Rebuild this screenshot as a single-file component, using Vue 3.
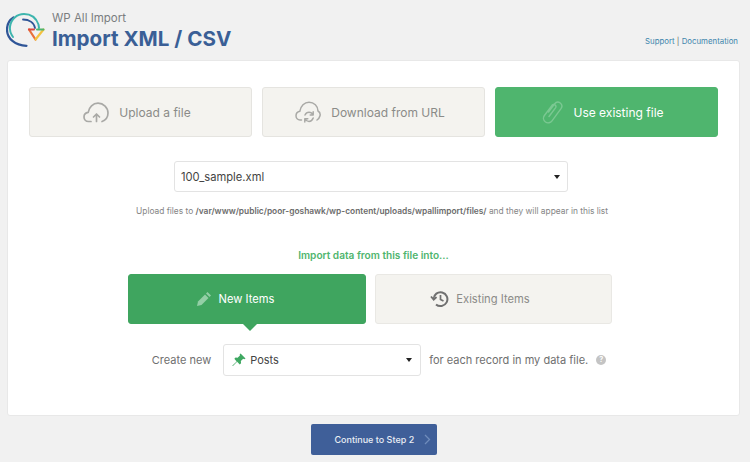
<template>
  <div class="page">
    <!-- header -->
    <header class="head">
      <svg class="logo" width="40" height="38" viewBox="6 12 40 38" fill="none" stroke-linecap="round">
        <path d="M26.500 45.800C15 45.500 7 38.500 7 29.500C7 24.500 9.500 20 13.500 17.500" stroke="#2f5597" stroke-width="2.200" />
        <path d="M13 37C10.500 33.500 9.500 30 10 26.500C11 19 17 14 24 14C30.500 14 36 17.500 38.500 24.500L39 28" stroke="#3db5ae" stroke-width="2" />
        <path d="M23 19.500C29 19.500 34 22.500 35 28" stroke="#2f5597" stroke-width="1.800" />
        <path d="M29 29.500L35.500 39.500" stroke="#e8703a" stroke-width="2.200" />
        <path d="M43.500 29.500L35.500 39.500" stroke="#f3c23f" stroke-width="2.200" />
        <path d="M29 29.500H34" stroke="#d9473f" stroke-width="2" />
        <path d="M37 29.500H43.500" stroke="#4fb56e" stroke-width="2" />
      </svg>
      <div class="head__titles">
        <div class="head__sub">WP All Import</div>
        <h1 class="head__title">Import XML / CSV</h1>
      </div>
      <div class="head__links"><a>Support</a> | <a>Documentation</a></div>
    </header>

    <!-- main card -->
    <main class="card">
      <div class="tabs">
        <div class="tab">
          <svg width="26" height="21" viewBox="0 0 26 21" fill="none" stroke="#a9a9a6" stroke-width="1.700" stroke-linecap="round" stroke-linejoin="round">
            <path d="M8 19.500H5.500C2.800 19.500 1 17.500 1 15C1 12.500 2.800 10.600 5.200 10.300C6 5 10 1.200 15 1.200C20.500 1.200 25 5.500 25 11C25 14.800 22.800 18 19 19.500" />
            <path d="M13.500 19.500V12.500M10.500 15L13.500 12L16.500 15" />
          </svg>
          <span>Upload a file</span>
        </div>
        <div class="tab">
          <svg width="26" height="22" viewBox="0 0 26 22" fill="none" stroke="#a9a9a6" stroke-width="1.500" stroke-linecap="round" stroke-linejoin="round">
            <path d="M6.500 19H5C2.800 19 1 17.200 1 14.800C1 12.500 2.600 10.800 4.800 10.300C5.600 5 9.500 1.200 14 1.200C19 1.200 23 5 23 10C24.800 11 25.500 12.800 25 14.800C24.600 16.500 23.500 18 22 19" />
            <path d="M10 14C10.800 12.300 12.300 11.300 14 11.300C15.800 11.300 17.200 12.200 18 13.800M18.200 10.800V14H15.200" />
            <path d="M18.200 17C17.400 19 15.800 20.400 14 20.400C12.200 20.400 10.800 19.500 10 18M9.800 21V17.800H12.800" />
          </svg>
          <span>Download from URL</span>
        </div>
        <div class="tab tab--on">
          <svg width="21" height="23" viewBox="0 0 21 23" fill="none" stroke="#7bc892" stroke-width="1.400" stroke-linecap="round" stroke-linejoin="round">
            <path d="M6.500 11L12.500 3C14 1 16.500 .7 18.300 2C20 3.400 20.300 5.800 19 7.700L10 19.800C8.500 21.900 5.600 22.500 3.500 21C1.300 19.400 .9 16.600 2.400 14.500L10 4.300C10.800 3.300 12 3.200 13 3.900C14 4.600 14.200 5.800 13.500 6.800L7 15.500" />
          </svg>
          <span>Use existing file</span>
        </div>
      </div>

      <div class="select select--file">
        <span>100_sample.xml</span>
        <i class="caret"></i>
      </div>
      <p class="hint">Upload files to <b>/var/www/public/poor-goshawk/wp-content/uploads/wpallimport/files/</b> and they will appear in this list</p>

      <p class="lead">Import data from this file into...</p>

      <div class="choices">
        <div class="choice choice--on">
          <svg width="16" height="16" viewBox="0 0 16 16" fill="#93cfa6">
            <path d="M11.500 1L15 4.500L13.500 6L10 2.500Z" />
            <path d="M9 3.500L12.500 7L5.500 14L1 15L2 10.500Z" />
          </svg>
          <span>New Items</span>
        </div>
        <div class="choice choice--off">
          <svg width="19" height="18" viewBox="0 0 19 18" fill="none" stroke="#707070" stroke-width="2">
            <path d="M3.600 9A6.900 6.900 0 1 1 6 14.400" />
            <path d="M1 6.500L3.700 9.700L6.500 7" stroke-width="1.800" />
            <path d="M10.500 5V9.400L13.500 11" stroke-width="1.700" />
          </svg>
          <span>Existing Items</span>
        </div>
      </div>

      <div class="create">
        <span>Create new</span>
        <div class="select select--type">
          <svg width="14" height="14" viewBox="0 0 15 15" fill="#3fa862">
            <path d="M9.200 0.500L14.500 5.800L13.300 6.600L12 6.200L9.500 8.700L9.700 11L8.300 12.200L5.500 9.500L1 14L0.500 14L0.500 13.500L5 9L2.500 6.200L3.800 4.800L6 5L8.500 2.600L8.300 1.400Z" />
          </svg>
          <span class="select__val">Posts</span>
          <i class="caret"></i>
        </div>
        <span>for each record in my data file.</span>
        <span class="help">?</span>
      </div>
    </main>

    <div class="foot">
      <button class="next">
        <span>Continue to Step 2</span>
        <svg width="7" height="11" viewBox="0 0 7 11" fill="none" stroke="#6f8cbb" stroke-width="1.300">
          <path d="M1 1L5.500 5.500L1 10" />
        </svg>
      </button>
    </div>
  </div>
</template>

<script setup>
</script>

<style>
html, body {
  margin: 0;
  background: #f1f1f1;
}
</style>

<style scoped>
.page {
  width: 750px;
  height: 462px;
  overflow: hidden;
  box-sizing: border-box;
  padding: 0 10px 0 7px;
  font-family: Inter, "Liberation Sans", sans-serif;
  background: #f1f1f1;
}

/* header */
.head {
  height: 60px;
  display: flex;
  margin-left: -7px;
}
.logo {
  margin: 12px 6px 0 6px;
  flex: none;
}
.head__titles {
  padding-top: 10px;
}
.head__sub {
  font-size: 11.500px;
  line-height: 16px;
  color: #7a7d80;
}
.head__title {
  margin: 0;
  font-size: 20.600px;
  line-height: 26px;
  font-weight: 700;
  color: #3a5f96;
}
.head__links {
  margin-left: auto;
  margin-right: 2px;
  padding-top: 34px;
  font-size: 7.850px;
  line-height: 14px;
  color: #666;
}
.head__links a {
  color: #3f86ad;
}

/* card */
.card {
  height: 356px;
  box-sizing: border-box;
  background: #fff;
  border: 1px solid #e8e8e8;
  border-radius: 3px;
  padding-top: 26px;
  display: flex;
  flex-direction: column;
  align-items: center;
}

.tabs {
  display: flex;
  gap: 9.500px;
}
.tab {
  width: 223.500px;
  height: 50px;
  box-sizing: border-box;
  display: flex;
  align-items: center;
  justify-content: center;
  gap: 10px;
  padding-right: 7px;
  background: #f4f3ef;
  border: 1px solid #e5e4e0;
  border-radius: 3px;
  font-size: 12px;
  color: #8b8b88;
}
.tab--on {
  background: #4fb56e;
  border-color: #4fb56e;
  color: #fff;
}

.select {
  box-sizing: border-box;
  display: flex;
  align-items: center;
  background: #fff;
  border: 1px solid #e3e3e3;
  border-radius: 3px;
  color: #444;
  font-size: 11.200px;
}
.select--file {
  width: 394px;
  height: 31px;
  margin: 24px 5px 0 0;
  padding: 0 7px 0 6px;
  justify-content: space-between;
}
.caret {
  width: 0;
  height: 0;
  border-left: 3.500px solid transparent;
  border-right: 3.500px solid transparent;
  border-top: 4px solid #222;
}

.hint {
  margin: 13px 3px 0 0;
  font-size: 8.400px;
  line-height: 12px;
  color: #858585;
}
.hint b {
  font-weight: 600;
  color: #6b6b6b;
}

.lead {
  margin: 31px 0 0;
  font-size: 10.100px;
  line-height: 14px;
  font-weight: 600;
  color: #4fb56e;
}

.choices {
  display: flex;
  gap: 9px;
  margin: 12px 8px 0 0;
}
.choice {
  position: relative;
  width: 238px;
  height: 50px;
  box-sizing: border-box;
  display: flex;
  align-items: center;
  justify-content: center;
  gap: 7px;
  background: #f4f3ef;
  border: 1px solid #e9e8e4;
  border-radius: 3px;
  font-size: 11.200px;
  color: #8b8b88;
}
.choice--on {
  padding-right: 23px;
  background: #3fa55f;
  border-color: #3fa55f;
  color: #fff;
}
.choice--off {
  width: 237px;
  padding-right: 26px;
}
/* little arrow under the active choice */
.choice--on::after {
  content: '';
  position: absolute;
  left: 50%;
  bottom: -8px;
  margin-left: -4px;
  border-left: 7px solid transparent;
  border-right: 7px solid transparent;
  border-top: 7px solid #3fa55f;
}

.create {
  display: flex;
  align-items: center;
  margin: 20px 0 0 11px;
  gap: 8px;
  font-size: 11px;
  color: #6f6f6f;
}
.select--type {
  width: 198px;
  height: 32px;
  margin-left: 4px;
  padding: 0 8px;
  gap: 4px;
  font-size: 11px;
}
.select__val {
  flex: 1;
  color: #444;
}
.help {
  width: 10px;
  height: 10px;
  border-radius: 50%;
  background: #c4c4c4;
  color: #fff;
  font-size: 7px;
  font-weight: 700;
  line-height: 10px;
  text-align: center;
}

/* footer */
.foot {
  display: flex;
  justify-content: center;
  padding-top: 8px;
}
.next {
  width: 126px;
  height: 31px;
  display: flex;
  align-items: center;
  gap: 10px;
  padding: 0 0 0 24px;
  background: #3f5f99;
  border: 0;
  border-radius: 2px;
  color: #e9edf4;
  font-family: inherit;
  font-size: 9px;
  font-weight: 500;
}
</style>
